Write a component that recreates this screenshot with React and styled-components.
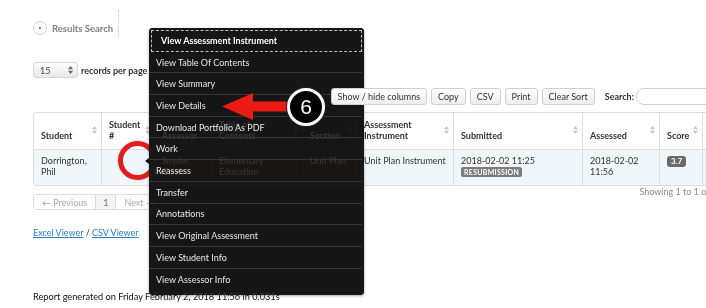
import React from "react";
import styled, { createGlobalStyle } from "styled-components";

const GlobalStyle = createGlobalStyle`
  html, body {
    margin: 0;
    padding: 0;
    background: #fff;
  }
  body {
    width: 706px;
    height: 308px;
    overflow: hidden;
    font-family: Lato, "Open Sans", Arial, sans-serif;
    font-size: 9px;
    color: #333;
  }
`;

const Page = styled.div`
  position: relative;
  width: 706px;
  height: 308px;
  overflow: hidden;
`;

const Content = styled.div`
  width: 713px;
  padding-left: 33px;
  display: flex;
  flex-direction: column;
`;

const TitleBar = styled.div`
  align-self: flex-start;
  display: flex;
  align-items: center;
  gap: 5px;
  box-sizing: border-box;
  height: 26px;
  margin-top: 10px;
  padding: 10px 5px 0 0;
  border-right: 1px dotted #c8c8c8;
`;

const TitleIcon = styled.span`
  width: 14px;
  height: 14px;
  box-sizing: border-box;
  border: 1px solid #d2d2d2;
  border-radius: 50%;
  display: flex;
  align-items: center;
  justify-content: center;

  &::after {
    content: "";
    width: 2px;
    height: 2px;
    border-radius: 50%;
    background: #555;
  }
`;

const Title = styled.span`
  font-size: 9.5px;
  font-weight: 700;
  color: #808080;
`;

const LengthRow = styled.div`
  display: flex;
  align-items: center;
  gap: 3px;
  margin-top: 26px;
  height: 16px;
  font-weight: 700;
  color: #333;
`;

const Select = styled.div`
  width: 45px;
  height: 16px;
  box-sizing: border-box;
  border: 1px solid #d6d6d6;
  border-radius: 3px;
  background: linear-gradient(#fdfdfd, #e9e9e9);
  display: flex;
  align-items: center;
  justify-content: space-between;
  padding: 0 4px 0 6px;
  font-weight: 400;
  color: #444;
`;

const Toolbar = styled.div`
  position: relative;
  z-index: 3;
  display: flex;
  justify-content: flex-end;
  align-items: center;
  gap: 4px;
  margin-top: 10px;
  height: 17px;
`;

const Button = styled.span`
  height: 17px;
  box-sizing: border-box;
  padding: 0 6px;
  display: flex;
  align-items: center;
  border: 1px solid #cfcfcf;
  border-radius: 3px;
  background: linear-gradient(#ffffff, #eeeeee);
  color: #333;
`;

const SearchLabel = styled.span`
  margin-left: 6px;
  font-weight: 700;
  color: #333;
`;

const SearchInput = styled.span`
  width: 110px;
  height: 17px;
  box-sizing: border-box;
  border: 1px solid #cfcfcf;
  border-radius: 8px 0 0 8px;
  background: #fff;
  margin-left: -2px;
`;

const TableBox = styled.div`
  margin-top: 7px;
  border: 1px solid #dddddd;
  border-right: none;
  border-radius: 4px 0 0 4px;
  overflow: hidden;
`;

const Table = styled.table`
  border-collapse: separate;
  border-spacing: 0;
  table-layout: fixed;
  width: 712px;
`;

const Th = styled.th`
  position: relative;
  text-align: left;
  vertical-align: bottom;
  padding: 6px 12px 8px 7px;
  line-height: 11px;
  font-weight: 700;
  color: #333;
  white-space: nowrap;
  border-right: 1px solid #dddddd;
  border-bottom: 1px solid #dddddd;
  background: #fff;
`;

const BodyRow = styled.tr`
  height: 35px;
`;

const Td = styled.td`
  vertical-align: top;
  padding: 5px 7px 0;
  line-height: 11px;
  color: #333;
  white-space: nowrap;
  background: #eff7fb;
  border-right: 1px solid #dddddd;
`;

const Badge = styled.span`
  display: inline-block;
  vertical-align: top;
  margin-top: 1px;
  padding: 0 3px;
  height: 10px;
  line-height: 10px;
  border-radius: 2px;
  background: ${(p) => (p.$dark ? "#6a6a6a" : "#7b7b7b")};
  color: #fff;
  font-size: ${(p) => (p.$dark ? "8px" : "7px")};
  font-weight: 700;
  letter-spacing: ${(p) => (p.$dark ? "0" : "0.3px")};
`;

const ScoreBadge = styled(Badge)`
  height: 11px;
  line-height: 11px;
  padding: 0 4px;
  border-radius: 3px;
  margin-top: 1px;
`;

const SortMark = styled.svg`
  position: absolute;
  right: 4px;
  top: 13px;
`;

const Footer = styled.div`
  display: flex;
  justify-content: space-between;
  align-items: flex-start;
`;

const Pager = styled.div`
  display: flex;
  margin-top: 8px;
  height: 16px;
  box-sizing: border-box;
  border: 1px solid #dddddd;
  border-radius: 3px;
  background: #fff;
`;

const PageItem = styled.span`
  display: flex;
  align-items: center;
  padding: 0 ${(p) => (p.$active ? "7px" : "8px")};
  color: ${(p) => (p.$active ? "#777" : "#a8a8a8")};
  background: ${(p) => (p.$active ? "#f4f4f4" : "#fff")};
  border-left: ${(p) => (p.$first ? "none" : "1px solid #dddddd")};
`;

const Info = styled.span`
  color: #8a8a8a;
`;

const Links = styled.div`
  margin-top: 17px;
  color: #333;
`;

const Link = styled.a`
  color: #2a7dc1;
  text-decoration: underline;
`;

const Report = styled.div`
  margin-top: 53px;
  font-size: 9.2px;
  color: #111;
`;

const Menu = styled.div`
  position: absolute;
  z-index: 2;
  left: 149px;
  top: 28px;
  width: 215px;
  height: 267px;
  box-sizing: border-box;
  padding: 2px 2px 0 0;
  border-radius: 4px;
  background: rgba(26, 26, 26, 0.84);
  backdrop-filter: invert(1);
  box-shadow: 0 1px 3px rgba(0, 0, 0, 0.35);
  display: flex;
  flex-direction: column;

  &::before {
    content: "";
    position: absolute;
    left: -4px;
    top: 130px;
    border-right: 4px solid #111;
    border-top: 3.5px solid transparent;
    border-bottom: 3.5px solid transparent;
  }
`;

const MenuItem = styled.div`
  height: 21.7px;
  box-sizing: border-box;
  display: flex;
  align-items: center;
  padding-left: ${(p) => (p.$focus ? "9px" : "7px")};
  margin-left: ${(p) => (p.$focus ? "2px" : "0")};
  color: ${(p) => (p.$focus ? "#fff" : "#e6e6e6")};
  font-weight: ${(p) => (p.$focus ? 700 : 400)};
  border: ${(p) => (p.$focus ? "1px dashed #bdbdbd" : "none")};
  border-bottom: ${(p) =>
    p.$focus ? "1px dashed #bdbdbd" : p.$last ? "none" : "1px solid #363636"};
`;

/* annotation ring sits under the menu; clip it at the menu's left edge */
const RingClip = styled.div`
  position: absolute;
  z-index: 1;
  left: 113px;
  top: 136px;
  width: 36px;
  height: 50px;
  overflow: hidden;
`;

const RedRing = styled.span`
  display: block;
  margin: 5px 0 0 5px;
  width: 39px;
  height: 39px;
  box-sizing: border-box;
  border: 5px solid #e31c1f;
  border-radius: 50%;
  box-shadow: 0 0 2px rgba(0, 0, 0, 0.25);
`;

const ArrowLayer = styled.svg`
  position: absolute;
  z-index: 4;
  left: 0;
  top: 0;
  pointer-events: none;
`;

const StepBadge = styled.div`
  position: absolute;
  z-index: 5;
  left: 287px;
  top: 88px;
  width: 38px;
  height: 38px;
  box-sizing: border-box;
  border: 3px solid #fff;
  border-radius: 50%;
  background: #000;
  box-shadow: 0 0 0 1px #222;
  color: #fff;
  font-family: "Liberation Sans", Arial, sans-serif;
  font-size: 21px;
  display: flex;
  align-items: center;
  justify-content: center;
`;

function SortIcon() {
  return (
    <SortMark width="5" height="8" viewBox="0 0 5 8">
      <path d="M0 3.3 L2.5 0 L5 3.3 Z M0 4.7 L5 4.7 L2.5 8 Z" fill="#c6c6c6" />
    </SortMark>
  );
}

function SelectArrows() {
  return (
    <svg width="5" height="8" viewBox="0 0 5 8">
      <path d="M0 3.3 L2.5 0 L5 3.3 Z M0 4.7 L5 4.7 L2.5 8 Z" fill="#666" />
    </svg>
  );
}

const columns = [
  { w: 68, label: "Student" },
  { w: 53, label: ["Student", "#"] },
  { w: 57, label: "Assessor" },
  { w: 91, label: ["Table of", "Contents"] },
  { w: 54, label: "Section" },
  { w: 97, label: ["Assessment", "Instrument"] },
  { w: 129, label: "Submitted" },
  { w: 77, label: "Assessed" },
  { w: 43, label: "Score" },
  { w: 43, label: "" },
];

const menuItems = [
  "View Assessment Instrument",
  "View Table Of Contents",
  "View Summary",
  "View Details",
  "Download Portfolio As PDF",
  "Work",
  "Reassess",
  "Transfer",
  "Annotations",
  "View Original Assessment",
  "View Student Info",
  "View Assessor Info",
];

export default function App() {
  return (
    <Page>
      <GlobalStyle />
      <Content>
        <TitleBar>
          <TitleIcon />
          <Title>Results Search</Title>
        </TitleBar>

        <LengthRow>
          <Select>
            <span>15</span>
            <SelectArrows />
          </Select>
          <span>records per page</span>
        </LengthRow>

        <Toolbar>
          <Button>Show / hide columns</Button>
          <Button>Copy</Button>
          <Button>CSV</Button>
          <Button>Print</Button>
          <Button>Clear Sort</Button>
          <SearchLabel>Search:</SearchLabel>
          <SearchInput />
        </Toolbar>

        <TableBox>
          <Table>
            <colgroup>
              {columns.map((c, i) => (
                <col key={i} style={{ width: c.w }} />
              ))}
            </colgroup>
            <thead>
              <tr>
                {columns.map((c, i) => (
                  <Th key={i}>
                    {Array.isArray(c.label) ? (
                      <>
                        {c.label[0]}
                        <br />
                        {c.label[1]}
                      </>
                    ) : (
                      c.label
                    )}
                    {c.label && <SortIcon />}
                  </Th>
                ))}
              </tr>
            </thead>
            <tbody>
              <BodyRow>
                <Td>
                  Dorrington,
                  <br />
                  Phil
                </Td>
                <Td></Td>
                <Td>
                  Snyder,
                  <br />
                  Carrie
                </Td>
                <Td>
                  Elementary
                  <br />
                  Education
                </Td>
                <Td>Unit Plan</Td>
                <Td>Unit Plan Instrument</Td>
                <Td>
                  2018-02-02 11:25
                  <br />
                  <Badge>RESUBMISSION</Badge>
                </Td>
                <Td>
                  2018-02-02
                  <br />
                  11:56
                </Td>
                <Td>
                  <ScoreBadge $dark>3.7</ScoreBadge>
                </Td>
                <Td></Td>
              </BodyRow>
            </tbody>
          </Table>
        </TableBox>

        <Footer>
          <Pager>
            <PageItem $first>← Previous</PageItem>
            <PageItem $active>1</PageItem>
            <PageItem>Next →</PageItem>
          </Pager>
          <Info>Showing 1 to 1 of 1 entries</Info>
        </Footer>

        <Links>
          <Link>Excel Viewer</Link> / <Link>CSV Viewer</Link>
        </Links>

        <Report>Report generated on Friday February 2, 2018 11:56 in 0.031s</Report>
      </Content>

      <RingClip>
        <RedRing />
      </RingClip>

      <Menu>
        {menuItems.map((item, i) => (
          <MenuItem key={item} $focus={i === 0} $last={i === menuItems.length - 1}>
            {item}
          </MenuItem>
        ))}
      </Menu>

      <ArrowLayer width="706" height="308" viewBox="0 0 706 308">
        <polygon
          points="222,106.5 253,93 253,101.5 296,101.5 296,111.5 253,111.5 253,120"
          fill="#ec1b13"
        />
      </ArrowLayer>
      <StepBadge>6</StepBadge>
    </Page>
  );
}
